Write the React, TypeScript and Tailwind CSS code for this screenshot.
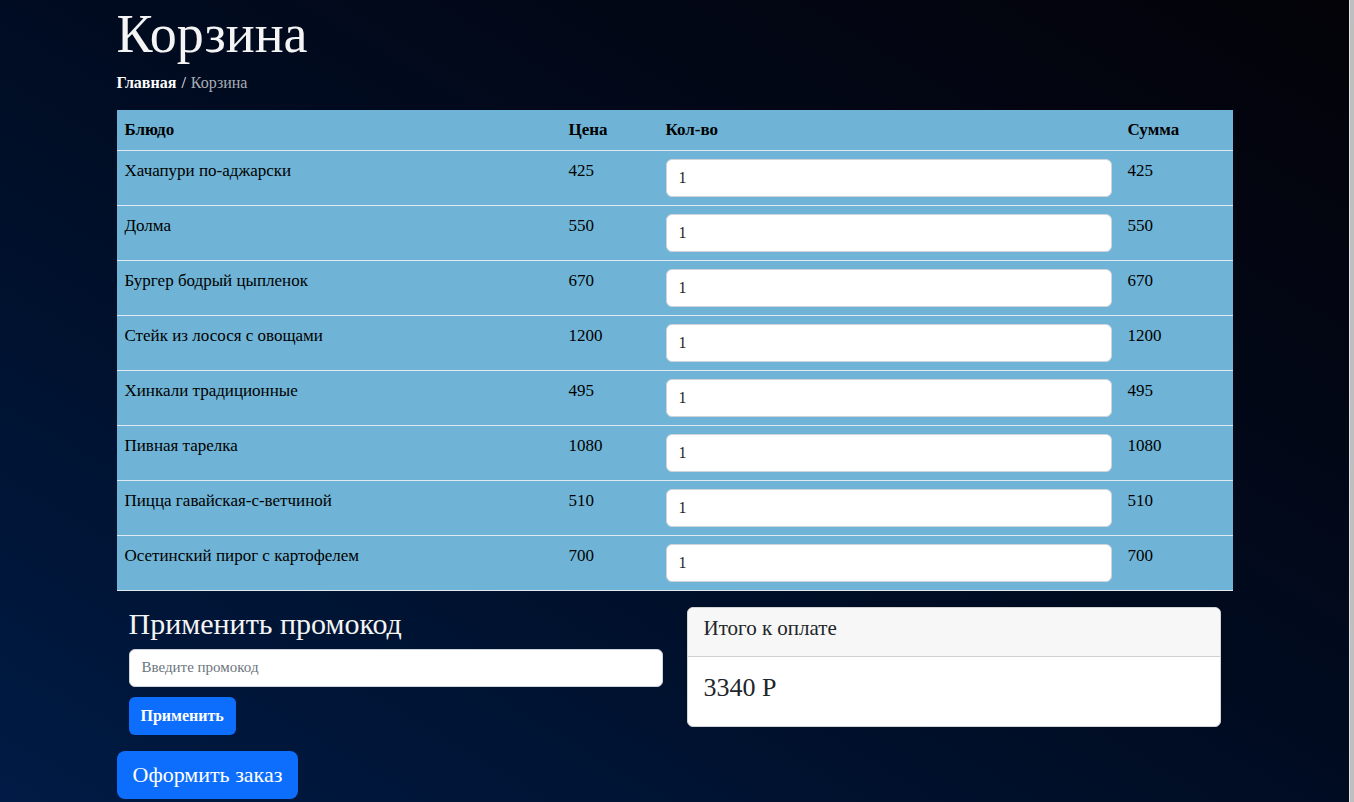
import React from 'react';

const items: Array<{ name: string; price: number }> = [
  { name: 'Хачапури по-аджарски', price: 425 },
  { name: 'Долма', price: 550 },
  { name: 'Бургер бодрый цыпленок', price: 670 },
  { name: 'Стейк из лосося с овощами', price: 1200 },
  { name: 'Хинкали традиционные', price: 495 },
  { name: 'Пивная тарелка', price: 1080 },
  { name: 'Пицца гавайская-с-ветчиной', price: 510 },
  { name: 'Осетинский пирог с картофелем', price: 700 },
];

export default function App() {
  return (
    <div className="flex h-screen overflow-hidden font-['Liberation_Serif',serif]">
      <div className="flex-1 bg-linear-to-tr from-[#001b45] via-[#000c22] to-[#030308]">
        <div className="mx-auto w-[1116px]">
          <h1 className="mt-[2px] text-[54px] leading-[1.2] text-[#f4f4f4]">Корзина</h1>

          {/* Breadcrumb */}
          <nav className="mt-[4px] mb-[15px] text-[16px] leading-6">
            <span className="font-bold text-white">Главная</span>
            <span className="px-[5px] text-white">/</span>
            <span className="text-[#a9acb3]">Корзина</span>
          </nav>

          {/* Cart table */}
          <table className="w-full table-fixed border-collapse bg-[#6fb4d6] text-[17px] text-black">
            <colgroup>
              <col className="w-[444px]" />
              <col className="w-[97px]" />
              <col className="w-[462px]" />
              <col className="w-[113px]" />
            </colgroup>
            <thead>
              <tr className="border-b border-[#dfe9ef]">
                <th className="p-2 text-left font-bold leading-6">Блюдо</th>
                <th className="p-2 text-left font-bold leading-6">Цена</th>
                <th className="p-2 text-left font-bold leading-6">Кол-во</th>
                <th className="p-2 text-left font-bold leading-6">Сумма</th>
              </tr>
            </thead>
            <tbody>
              {items.map((it) => (
                <tr key={it.name} className="border-b border-[#dfe9ef]">
                  <td className="p-2 align-top leading-6">{it.name}</td>
                  <td className="p-2 align-top leading-6">{it.price}</td>
                  <td className="p-2 align-top">
                    <input
                      type="number"
                      defaultValue={1}
                      className="block h-[38px] w-full rounded-md border border-[#ced4da] bg-white px-3 text-[16px] text-[#212529] outline-none"
                    />
                  </td>
                  <td className="p-2 align-top leading-6">{it.price}</td>
                </tr>
              ))}
            </tbody>
          </table>

          <div className="mt-4 flex">
            {/* Promo */}
            <div className="w-[558px] px-3">
              <h3 className="text-[30px] leading-[34px] text-[#f4f4f4]">Применить промокод</h3>
              <input
                placeholder="Введите промокод"
                className="mt-2 block h-[38px] w-full rounded-md border border-[#ced4da] bg-white px-3 text-[15px] text-[#212529] outline-none placeholder:text-[#6c757d]"
              />
              <button
                type="button"
                className="mt-[10px] h-[38px] rounded-md bg-[#0d6efd] px-3 text-[16px] font-bold text-white"
              >
                Применить
              </button>
            </div>

            {/* Total */}
            <div className="w-[558px] px-3">
              <div className="overflow-hidden rounded-md border border-[#d4d4d4] bg-white">
                <div className="border-b border-[#d0d0d0] bg-[#f7f7f7] px-4 pt-2 pb-4">
                  <h5 className="text-[21px] leading-6 text-[#212529]">Итого к оплате</h5>
                </div>
                <div className="p-4">
                  <h4 className="mb-2 text-[26px] leading-[29px] text-[#212529]">3340 Р</h4>
                </div>
              </div>
            </div>
          </div>

          <button
            type="button"
            className="mt-4 h-12 rounded-lg bg-[#0d6efd] px-4 text-[22px] text-white"
          >
            Оформить заказ
          </button>
        </div>
      </div>
      <div className="w-[5px] border-l border-[#e4e4e4] bg-[#bfbfbf]" />
    </div>
  );
}
